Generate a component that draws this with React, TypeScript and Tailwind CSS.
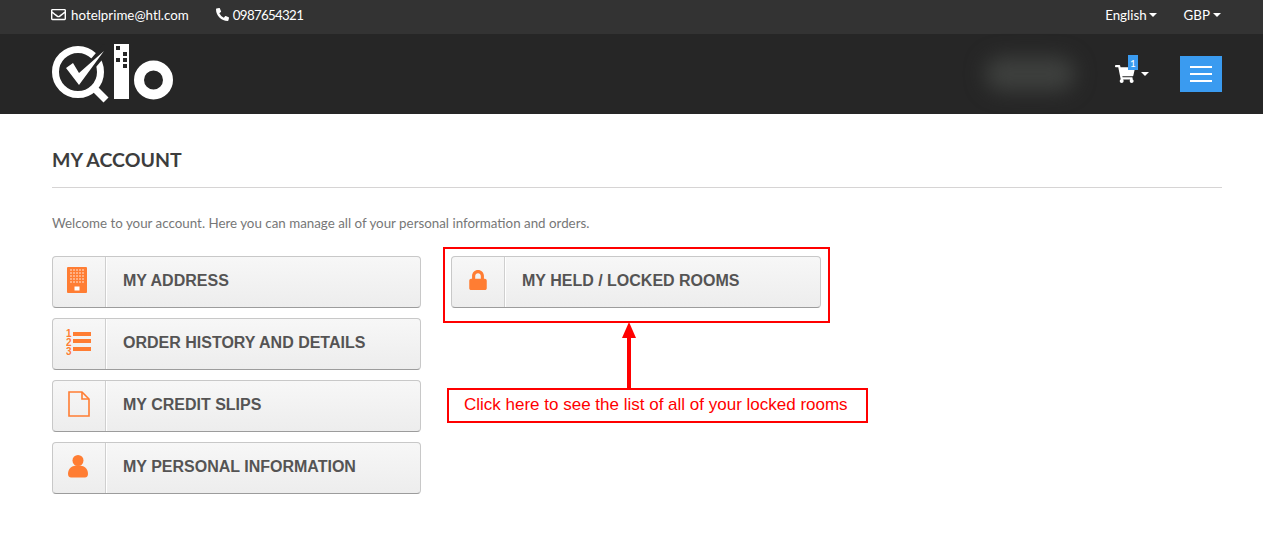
import React from 'react';
import { FaRegEnvelope, FaPhoneAlt, FaShoppingCart, FaLock } from 'react-icons/fa';

const Caret = () => (
  <span className="inline-block w-0 h-0 border-x-[4px] border-x-transparent border-t-[4px] border-t-white" />
);

const Logo = () => (
  <svg width="122" height="60" viewBox="0 0 122 60" className="block">
    <circle cx="26" cy="28" r="22.5" fill="none" stroke="#fff" strokeWidth="7" />
    <path d="M41 43 L54 56" stroke="#fff" strokeWidth="7" />
    <path d="M27 36 L55 3" fill="none" stroke="#262626" strokeWidth="9" />
    <path d="M14 24 L21 19 L27 29 L52 7 L27 41 Z" fill="#fff" />
    <rect x="62" y="0" width="15" height="55" fill="#fff" />
    <rect x="64" y="2" width="4" height="4" fill="#262626" />
    <rect x="71" y="8" width="4" height="4" fill="#262626" />
    <rect x="64" y="14" width="4" height="4" fill="#262626" />
    <rect x="71" y="14" width="4" height="4" fill="#262626" />
    <rect x="71" y="20" width="4" height="4" fill="#262626" />
    <circle cx="101.5" cy="36" r="14.5" fill="none" stroke="#fff" strokeWidth="10" />
  </svg>
);

const BuildingIcon = () => (
  <svg width="20" height="26" viewBox="0 0 20 26" className="mr-[4px]">
    <rect width="20" height="26" rx="1" fill="#ff7d33" />
    {[3, 6, 9, 12, 15].map((y) =>
      [4, 7, 10, 13, 16].map((x) =>
        <rect key={`${x}-${y}`} x={x - 0.7} y={y - 0.7} width="1.4" height="1.4" fill="#fff" opacity="0.8" />
      )
    )}
    <rect x="7.5" y="19.5" width="5" height="4" fill="#fff" />
  </svg>
);

const ListIcon = () => (
  <svg width="25" height="28" viewBox="0 0 25 28" className="mr-[1px] mt-[2px]">
    <rect x="7" y="3" width="18" height="4" fill="#ff7d33" />
    <rect x="7" y="10" width="18" height="4" fill="#ff7d33" />
    <rect x="7" y="18" width="18" height="4" fill="#ff7d33" />
    <text x="0" y="8" fontFamily="Liberation Sans, sans-serif" fontSize="10" fontWeight="700" fill="#ff7d33">1</text>
    <text x="0" y="17" fontFamily="Liberation Sans, sans-serif" fontSize="10" fontWeight="700" fill="#ff7d33">2</text>
    <text x="0" y="25.5" fontFamily="Liberation Sans, sans-serif" fontSize="10" fontWeight="700" fill="#ff7d33">3</text>
  </svg>
);

const FileIcon = () => (
  <svg width="22" height="26" viewBox="0 0 22 26">
    <path d="M1 1 H14 L21 8 V25 H1 Z" fill="none" stroke="#ff7d33" strokeWidth="1.6" />
    <path d="M14 1 V8 H21" fill="none" stroke="#ff7d33" strokeWidth="1.6" />
  </svg>
);

const PersonIcon = () => (
  <svg width="20" height="23" viewBox="0 0 20 23" className="mr-[2px]">
    <circle cx="10" cy="5.5" r="5.5" fill="#ff7d33" />
    <path d="M0 19 C0 13 4 10.5 10 10.5 C16 10.5 20 13 20 19 C20 21.5 18.5 22.5 17 22.5 H3 C1.5 22.5 0 21.5 0 19 Z" fill="#ff7d33" />
  </svg>
);

const AccountButton = ({ icon, label }: { icon: React.ReactNode; label: string }) => (
  <div className="flex h-[52px] w-full rounded-[4px] border border-[#c8c8c8] border-b-[#9c9c9c] bg-gradient-to-b from-[#f7f7f7] to-[#ededed]">
    <div className="flex w-[53px] shrink-0 items-center justify-center border-r border-[#cfcfcf] pb-[4px] shadow-[1px_0_0_#fff]">{icon}</div>
    <div className="flex items-center pb-[3px] pl-[17px] font-['Liberation_Sans',sans-serif] text-base font-bold text-[#555454]">{label}</div>
  </div>
);

export default function App() {
  return (
    <div className="relative h-[542px] overflow-hidden bg-white font-['Lato',sans-serif]">
      <div className="h-[34px] bg-[#333333] px-[52px] pr-[42px]">
        <div className="flex h-full items-center justify-between pb-[4px] text-[13.35px] text-white">
          <div className="flex items-center">
            <FaRegEnvelope className="-ml-[1px] mr-[5px] text-[15px]" />
            <span>hotelprime@htl.com</span>
            <FaPhoneAlt className="ml-[27px] mr-[4px] text-[13px]" />
            <span className="tracking-[-0.7px]">0987654321</span>
          </div>
          <div className="flex items-center">
            <span>English</span>
            <span className="ml-[2px] flex"><Caret /></span>
            <span className="ml-[27px]">GBP</span>
            <span className="ml-[3px] flex"><Caret /></span>
          </div>
        </div>
      </div>

      <div className="flex h-[80px] items-center justify-between bg-[#262626] pl-[52px] pr-[41px]">
        <Logo />
        <div className="flex items-center">
          <div className="mr-[40px] h-[34px] w-[90px] rounded-full bg-[#3e403e] blur-[10px]" />
          <div className="relative mr-[31px] flex items-center">
            <FaShoppingCart className="text-[20px] text-white" />
            <span className="absolute left-[13px] top-[-9px] flex h-[15px] w-[10px] items-center justify-center bg-[#3a9bf0] text-[10px] leading-none text-white">1</span>
            <span className="ml-[6px] flex"><Caret /></span>
          </div>
          <div className="flex h-[36px] w-[42px] flex-col items-center justify-center gap-[5px] bg-[#3a9bf0]">
            <span className="h-[2px] w-[22px] bg-white" />
            <span className="h-[2px] w-[22px] bg-white" />
            <span className="h-[2px] w-[22px] bg-white" />
          </div>
        </div>
      </div>

      <div className="px-[52px] pr-[41px]">
        <h1 className="mt-[33px] text-[19.5px] font-bold leading-[26px] text-[#3d3d3d]">MY ACCOUNT</h1>
        <div className="mt-[14px] border-t border-[#d6d4d4]" />
        <p className="mt-[26px] text-[13.35px] leading-[18px] text-[#777777]">Welcome to your account. Here you can manage all of your personal information and orders.</p>
        <div className="mt-[24px] flex gap-[30px]">
          <div className="flex w-[369px] flex-col gap-[10px]">
            <AccountButton icon={<BuildingIcon />} label="MY ADDRESS" />
            <AccountButton icon={<ListIcon />} label="ORDER HISTORY AND DETAILS" />
            <AccountButton icon={<FileIcon />} label="MY CREDIT SLIPS" />
            <AccountButton icon={<PersonIcon />} label="MY PERSONAL INFORMATION" />
          </div>
          <div className="w-[370px]">
            <AccountButton icon={<FaLock className="text-[20px] text-[#ff7d33]" />} label="MY HELD / LOCKED ROOMS" />
          </div>
        </div>
      </div>

      {/* annotation overlay */}
      <div className="absolute left-[443px] top-[247px] h-[76px] w-[387px] border-2 border-[#ff0000]" />
      <div className="absolute left-[627px] top-[335px] h-[54px] w-[4px] bg-[#ff0000]" />
      <svg width="14" height="16" className="absolute left-[622px] top-[322px]">
        <polygon points="7,0 14,16 0,16" fill="#ff0000" />
      </svg>
      <div className="absolute left-[447px] top-[388px] flex h-[35px] w-[421px] items-center border-2 border-[#ff0000] bg-white pb-[2px] pl-[15px] font-['Liberation_Sans',sans-serif] text-[17px] text-[#ff0000]">
        Click here to see the list of all of your locked rooms
      </div>
    </div>
  );
}
